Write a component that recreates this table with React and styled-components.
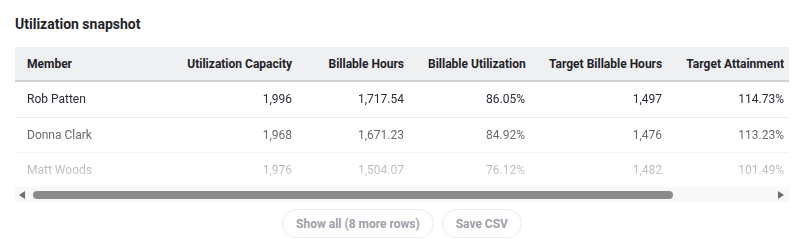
import React from "react";
import styled, { createGlobalStyle } from "styled-components";

const GlobalStyle = createGlobalStyle`
  body {
    margin: 0;
    background: #ffffff;
    font-family: Roboto, "Liberation Sans", sans-serif;
  }
`;

const Page = styled.div`
  width: 774px;
  padding: 0 19px 0 15px;
`;

const Title = styled.h2`
  margin: 0;
  padding-top: 15px;
  height: 47px;
  box-sizing: border-box;
  font-size: 14px;
  line-height: 18px;
  font-weight: 700;
  color: #1f2328;
`;

const Scroller = styled.div`
  max-height: 140px;
  overflow: hidden;
`;

const Table = styled.table`
  width: 900px;
  border-collapse: collapse;
  table-layout: fixed;
  font-size: 12px;
  mask-image: linear-gradient(
    to bottom,
    #000 0%,
    #000 45%,
    rgba(0, 0, 0, 0.08) 100%
  );
`;

const Th = styled.th`
  box-sizing: border-box;
  width: ${(p) => p.$w}px;
  height: 34px;
  padding: 0 12px;
  background: #eff0f2;
  border-bottom: 2px solid #cfd1d5;
  color: #1f2328;
  font-weight: 700;
  text-align: ${(p) => (p.$left ? "left" : "right")};
  white-space: nowrap;
  overflow: hidden;
`;

const Td = styled.td`
  height: 34.5px;
  padding: 0 12px;
  border-bottom: 1px solid #e8e9eb;
  color: #2a2e35;
  text-align: ${(p) => (p.$left ? "left" : "right")};
  white-space: nowrap;
  overflow: hidden;
`;

const ScrollBar = styled.div`
  display: flex;
  align-items: center;
  height: 15px;
  padding: 0 5px 0 4px;
  background: #f8f8f8;
`;

const Arrow = styled.span`
  width: 0;
  height: 0;
  border-top: 4px solid transparent;
  border-bottom: 4px solid transparent;
  ${(p) =>
    p.$dir === "left"
      ? "border-right: 6px solid #6f6f6f; margin-right: 8px;"
      : "border-left: 6px solid #6f6f6f; margin-left: auto;"}
`;

const Thumb = styled.div`
  height: 8px;
  border-radius: 4px;
  background: #8b8b8b;
`;

const Actions = styled.div`
  display: flex;
  justify-content: center;
  gap: 8px;
  margin-top: 7px;
`;

const Button = styled.button`
  height: 29px;
  padding: 0 13px;
  border: 1px solid #eaecef;
  border-radius: 15px;
  background: #ffffff;
  color: #9ea1a8;
  font-family: Roboto, "Liberation Sans", sans-serif;
  font-size: 12px;
  font-weight: 700;
  cursor: pointer;
`;

const columns = [
  { label: "Member", w: 160, left: true },
  { label: "Utilization Capacity", w: 129 },
  { label: "Billable Hours", w: 112 },
  { label: "Billable Utilization", w: 121 },
  { label: "Target Billable Hours", w: 137 },
  { label: "Target Attainment", w: 122 },
  { label: "", w: 119 },
];

const rows = [
  ["Rob Patten", "1,996", "1,717.54", "86.05%", "1,497", "114.73%", ""],
  ["Donna Clark", "1,968", "1,671.23", "84.92%", "1,476", "113.23%", ""],
  ["Matt Woods", "1,976", "1,504.07", "76.12%", "1,482", "101.49%", ""],
];

const VIEW = 774;
const CONTENT = 900;
const TRACK = 744;

export default function App() {
  const thumbWidth = Math.round((VIEW / CONTENT) * TRACK);
  return (
    <Page>
      <GlobalStyle />
      <Title>Utilization snapshot</Title>
      <Scroller>
        <Table>
          <thead>
            <tr>
              {columns.map((c, i) => (
                <Th key={i} $w={c.w} $left={c.left}>
                  {c.label}
                </Th>
              ))}
            </tr>
          </thead>
          <tbody>
            {rows.map((r) => (
              <tr key={r[0]}>
                {r.map((v, i) => (
                  <Td key={i} $left={i === 0}>
                    {v}
                  </Td>
                ))}
              </tr>
            ))}
          </tbody>
        </Table>
      </Scroller>
      <ScrollBar>
        <Arrow $dir="left" />
        <Thumb style={{ width: thumbWidth }} />
        <Arrow $dir="right" />
      </ScrollBar>
      <Actions>
        <Button>Show all (8 more rows)</Button>
        <Button>Save CSV</Button>
      </Actions>
    </Page>
  );
}
